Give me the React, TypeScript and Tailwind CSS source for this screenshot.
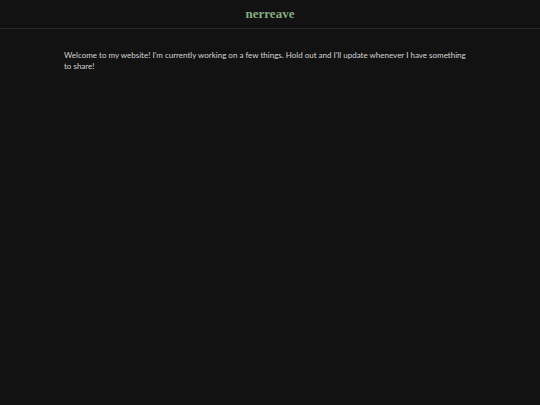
export default function App() {
  return (
    <div className="min-h-[405px] bg-[#121212]">
      <header className="flex h-[29px] items-center justify-center border-b border-[#262626]">
        <h1 className="font-['Liberation_Serif',serif] text-[13px] font-bold text-[#86ad80]">nerreave</h1>
      </header>
      <main className="px-16 pt-[21px]">
        <p className="max-w-[404px] font-['Lato',sans-serif] text-[8px] leading-[11px] text-[#d4d4d4]">
          Welcome to my website! I'm currently working on a few things. Hold out and I'll update whenever I have something to share!
        </p>
      </main>
    </div>
  );
}
